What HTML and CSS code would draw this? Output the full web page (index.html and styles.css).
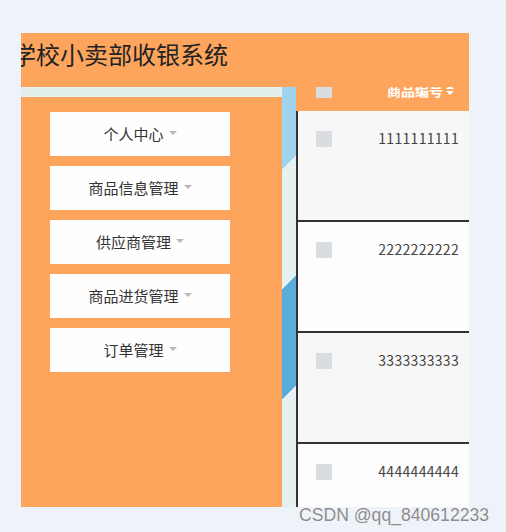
FILE: index.html
```html
<!DOCTYPE html>
<html lang="zh-CN">
<head>
    <meta charset="UTF-8">
    <meta name="viewport" content="width=device-width, initial-scale=1.0">
    <title>学校小卖部收银系统</title>
    <link rel="stylesheet" href="styles.css">
</head>
<body>
    <div class="panel">
        <div class="topbar">
            <h1 class="title">学校小卖部收银系统</h1>
        </div>
        <div class="main">
            <div class="sidebar">
                <div class="menu-btn">个人中心<span class="caret"></span></div>
                <div class="menu-btn">商品信息管理<span class="caret"></span></div>
                <div class="menu-btn">供应商管理<span class="caret"></span></div>
                <div class="menu-btn">商品进货管理<span class="caret"></span></div>
                <div class="menu-btn">订单管理<span class="caret"></span></div>
            </div>
            <div class="strip"></div>
            <div class="grid">
                <div class="grid-head">
                    <span class="check"></span>
                    <span class="head-label">商品编号<svg class="sort" width="10" height="12" viewBox="0 0 10 12"><polygon points="1,5 5,1 9,5" fill="#fff"/><polygon points="1,7 9,7 5,11" fill="#fff"/></svg></span>
                </div>
                <div class="row odd"><span class="check"></span><span class="code">1111111111</span></div>
                <div class="row"><span class="check"></span><span class="code">2222222222</span></div>
                <div class="row odd"><span class="check"></span><span class="code">3333333333</span></div>
                <div class="row"><span class="check"></span><span class="code">4444444444</span></div>
            </div>
        </div>
    </div>
    <div class="watermark">CSDN @qq_840612233</div>
</body>
</html>
```

FILE: styles.css
```css
body, html {
    margin: 0;
    padding: 0;
    height: 100%;
    background-color: #eef2f9;
    font-family: "Noto Sans CJK SC", "Noto Sans", sans-serif;
}
.panel {
    margin: 33px 0 0 21px;
    width: 448px;
    height: 474px;
    overflow: hidden;
    background-color: #fea55d;
}
.topbar {
    box-sizing: border-box;
    height: 54px;
    padding-top: 9px;
}
.title {
    margin: 0 0 0 -9px;
    font-size: 24px;
    line-height: 24px;
    font-weight: normal;
    color: #222;
    white-space: nowrap;
}
.main {
    display: flex;
    height: 420px;
}
.sidebar {
    box-sizing: border-box;
    width: 261px;
    flex-shrink: 0;
    border-top: 10px solid #e2efeb;
    padding: 15px 0 0 29px;
    display: flex;
    flex-direction: column;
    gap: 10px;
}
.menu-btn {
    box-sizing: border-box;
    width: 180px;
    height: 44px;
    padding-bottom: 2px;
    background-color: #fefefe;
    display: flex;
    align-items: center;
    justify-content: center;
    font-size: 15px;
    color: #333;
}
.caret {
    width: 0;
    height: 0;
    margin-left: 5px;
    border-left: 4px solid transparent;
    border-right: 4px solid transparent;
    border-top: 4px solid #b8b8b8;
}
.strip {
    width: 14px;
    flex-shrink: 0;
    background: linear-gradient(135deg,
        #a1d3ec 0, #a1d3ec 58px,
        #e5f0f0 58px, #e5f0f0 143px,
        #5aaddb 143px, #5aaddb 221px,
        #e6f0f1 221px);
}
.grid {
    width: 173px;
    flex-shrink: 0;
}
.grid-head {
    box-sizing: border-box;
    height: 24px;
    overflow: hidden;
    display: flex;
    align-items: flex-start;
    padding: 0 14px 0 20px;
}
.grid-head .check {
    margin-top: -5px;
}
.head-label {
    margin-left: auto;
    margin-top: -5px;
    display: flex;
    align-items: center;
    font-size: 14px;
    line-height: 16px;
    font-weight: bold;
    color: #fff;
}
.sort {
    margin-left: 2px;
}
.check {
    width: 16px;
    height: 16px;
    flex-shrink: 0;
    background-color: #d9dde2;
}
.row {
    box-sizing: border-box;
    height: 111px;
    border-left: 2px solid #333;
    border-bottom: 2px solid #333;
    background-color: #fdfdfd;
    display: flex;
    align-items: flex-start;
    padding: 20px 10px 0 18px;
}
.row.odd {
    background-color: #f7f7f7;
}
.code {
    margin-left: auto;
    margin-top: -1px;
    font-size: 14px;
    line-height: 16px;
    letter-spacing: 0.3px;
    color: #444;
}
.watermark {
    position: absolute;
    left: 299px;
    top: 505px;
    font-family: "Liberation Sans", Arial, sans-serif;
    font-size: 17.6px;
    color: #8c8c8c;
    text-shadow: 0 0 1px #fff;
    white-space: nowrap;
}
```
